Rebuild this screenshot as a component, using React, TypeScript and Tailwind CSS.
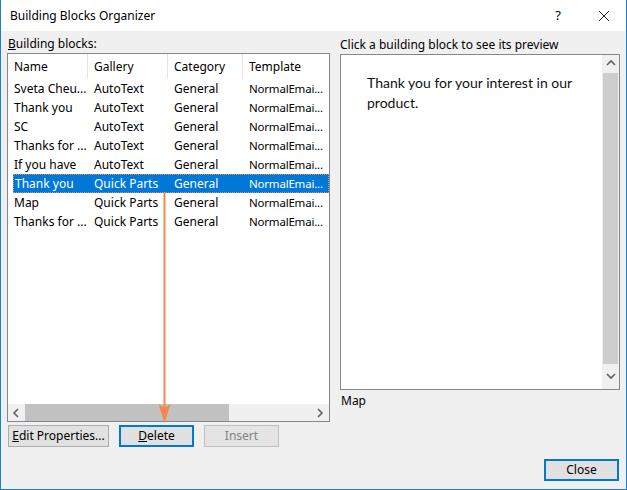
import React from "react";

const rows = [
  ["Sveta Cheu...", "AutoText", "General", "NormalEmai..."],
  ["Thank you", "AutoText", "General", "NormalEmai..."],
  ["SC", "AutoText", "General", "NormalEmai..."],
  ["Thanks for ...", "AutoText", "General", "NormalEmai..."],
  ["If you have", "AutoText", "General", "NormalEmai..."],
  ["Thank you", "Quick Parts", "General", "NormalEmai..."],
  ["Map", "Quick Parts", "General", "NormalEmai..."],
  ["Thanks for ...", "Quick Parts", "General", "NormalEmai..."],
];

const cols = ["w-[80px]", "w-[80px]", "w-[75px]", "w-[86px]"];

function Chevron({ dir }: { dir: "left" | "right" | "up" | "down" }) {
  const d = {
    left: "M6 1 L2 5 L6 9",
    right: "M2 1 L6 5 L2 9",
    up: "M1 6 L5 2 L9 6",
    down: "M1 2 L5 6 L9 2",
  }[dir];
  return (
    <svg width="10" height="10" viewBox="0 0 10 10">
      <path d={d} fill="none" stroke="#606060" strokeWidth="1.6" />
    </svg>
  );
}

function Btn({
  children,
  w,
  focus,
  disabled,
}: {
  children: React.ReactNode;
  w: string;
  focus?: boolean;
  disabled?: boolean;
}) {
  return (
    <div
      className={`${w} h-[22px] flex items-center justify-center text-[12px] ${
        focus
          ? "border-2 border-[#0078d7] bg-[#e1e1e1] text-black"
          : disabled
          ? "border border-[#bfbfbf] bg-[#e4e4e4] text-[#838383]"
          : "border border-[#adadad] bg-[#e1e1e1] text-black"
      }`}
    >
      {children}
    </div>
  );
}

export default function App() {
  return (
    <div
      className="relative w-[627px] h-[490px] flex flex-col border border-t-0 border-[#1a7fd4] bg-[#f0f0f0] text-black"
      style={{ fontFamily: '"Segoe UI", "Noto Sans", sans-serif' }}
    >
      {/* title bar */}
      <div className="h-[31px] bg-white flex items-center pl-[9px] pr-[12px] text-[12px]">
        <span className="flex-1">Building Blocks Organizer</span>
        <span className="w-[20px] text-center mr-[30px] text-[13px]">?</span>
        <svg width="12" height="12" viewBox="0 0 12 12" className="mr-[4px]">
          <path d="M1 1 L11 11 M11 1 L1 11" stroke="#222" strokeWidth="1" />
        </svg>
      </div>

      <div className="flex-1 flex flex-col px-[6px]">
        <div className="flex gap-[10px]">
          {/* left column */}
          <div className="w-[323px] flex flex-col">
            <div className="h-[22px] pl-[1px] pt-[5px] text-[12px] leading-[16px]">
              <span className="underline">B</span>uilding blocks:
            </div>
            <div className="h-[369px] border border-[#828790] bg-white flex flex-col overflow-hidden">
              <div className="flex h-[25px] text-[12px]">
                {["Name", "Gallery", "Category", "Template"].map((h, i) => (
                  <div
                    key={h}
                    className={`${cols[i]} shrink-0 flex items-center pl-[6px] ${
                      i < 3 ? "border-r border-[#e5e5e5]" : ""
                    }`}
                  >
                    {h}
                  </div>
                ))}
              </div>
              <div className="flex-1">
                {rows.map((r, idx) => {
                  const sel = idx === 5;
                  return (
                    <div
                      key={idx}
                      className={`flex h-[19px] items-center text-[12px] ${
                        sel
                          ? "ml-[5px] bg-[#0078d7] text-white border border-dotted border-[#e38a4f]"
                          : ""
                      }`}
                    >
                      {r.map((c, i) => (
                        <div
                          key={i}
                          className={`${
                            sel && i === 0 ? "w-[74px] pl-[1px]" : `${cols[i]} pl-[6px]`
                          } ${i === 3 ? "text-[11.5px] tracking-[-0.2px]" : ""} shrink-0 whitespace-nowrap`}
                        >
                          {c}
                        </div>
                      ))}
                    </div>
                  );
                })}
              </div>
              {/* horizontal scrollbar */}
              <div className="h-[17px] flex items-center bg-[#f0f0f0]">
                <div className="w-[17px] flex justify-center">
                  <Chevron dir="left" />
                </div>
                <div className="w-[204px] h-[17px] bg-[#c1c1c1]" />
                <div className="flex-1" />
                <div className="w-[17px] flex justify-center">
                  <Chevron dir="right" />
                </div>
              </div>
            </div>
            <div className="flex gap-[10px] mt-[3px] pl-[1px]">
              <Btn w="w-[101px]">
                <span>
                  <span className="underline">E</span>dit Properties...
                </span>
              </Btn>
              <Btn w="w-[75px]" focus>
                <span>
                  <span className="underline">D</span>elete
                </span>
              </Btn>
              <Btn w="w-[75px]" disabled>
                Insert
              </Btn>
            </div>
          </div>

          {/* right column */}
          <div className="w-[281px] flex flex-col">
            <div className="h-[23px] pt-[6px] text-[12px] leading-[16px]">
              Click a building block to see its preview
            </div>
            <div className="h-[336px] border border-[#828790] bg-white flex">
              <div
                className="flex-1 pl-[26px] pr-[8px] pt-[18px] text-[14px] leading-[20px] text-[#111]"
                style={{ fontFamily: "Lato, sans-serif" }}
              >
                Thank you for your interest in our product.
              </div>
              <div className="w-[17px] flex flex-col bg-[#f0f0f0]">
                <div className="h-[18px] flex items-center justify-center">
                  <Chevron dir="up" />
                </div>
                <div className="h-[291px] mx-[1px] bg-[#cdcdcd]" />
                <div className="flex-1 flex items-center justify-center">
                  <Chevron dir="down" />
                </div>
              </div>
            </div>
            <div className="pt-[3px] pl-[1px] text-[12px] leading-[16px]">Map</div>
          </div>
        </div>

        <div className="flex justify-end mt-[12px] pr-[1px]">
          <Btn w="w-[75px]" focus>
            Close
          </Btn>
        </div>
      </div>

      {/* annotation arrow */}
      <svg
        className="absolute left-[154px] top-[192px] pointer-events-none"
        width="20"
        height="232"
        viewBox="0 0 20 232"
      >
        <line x1="9.5" y1="0" x2="9.5" y2="216" stroke="#f4874b" strokeWidth="2" />
        <path d="M3.5 212 L9.5 231 L15.5 212 L9.5 216 Z" fill="#f4874b" />
      </svg>
    </div>
  );
}
